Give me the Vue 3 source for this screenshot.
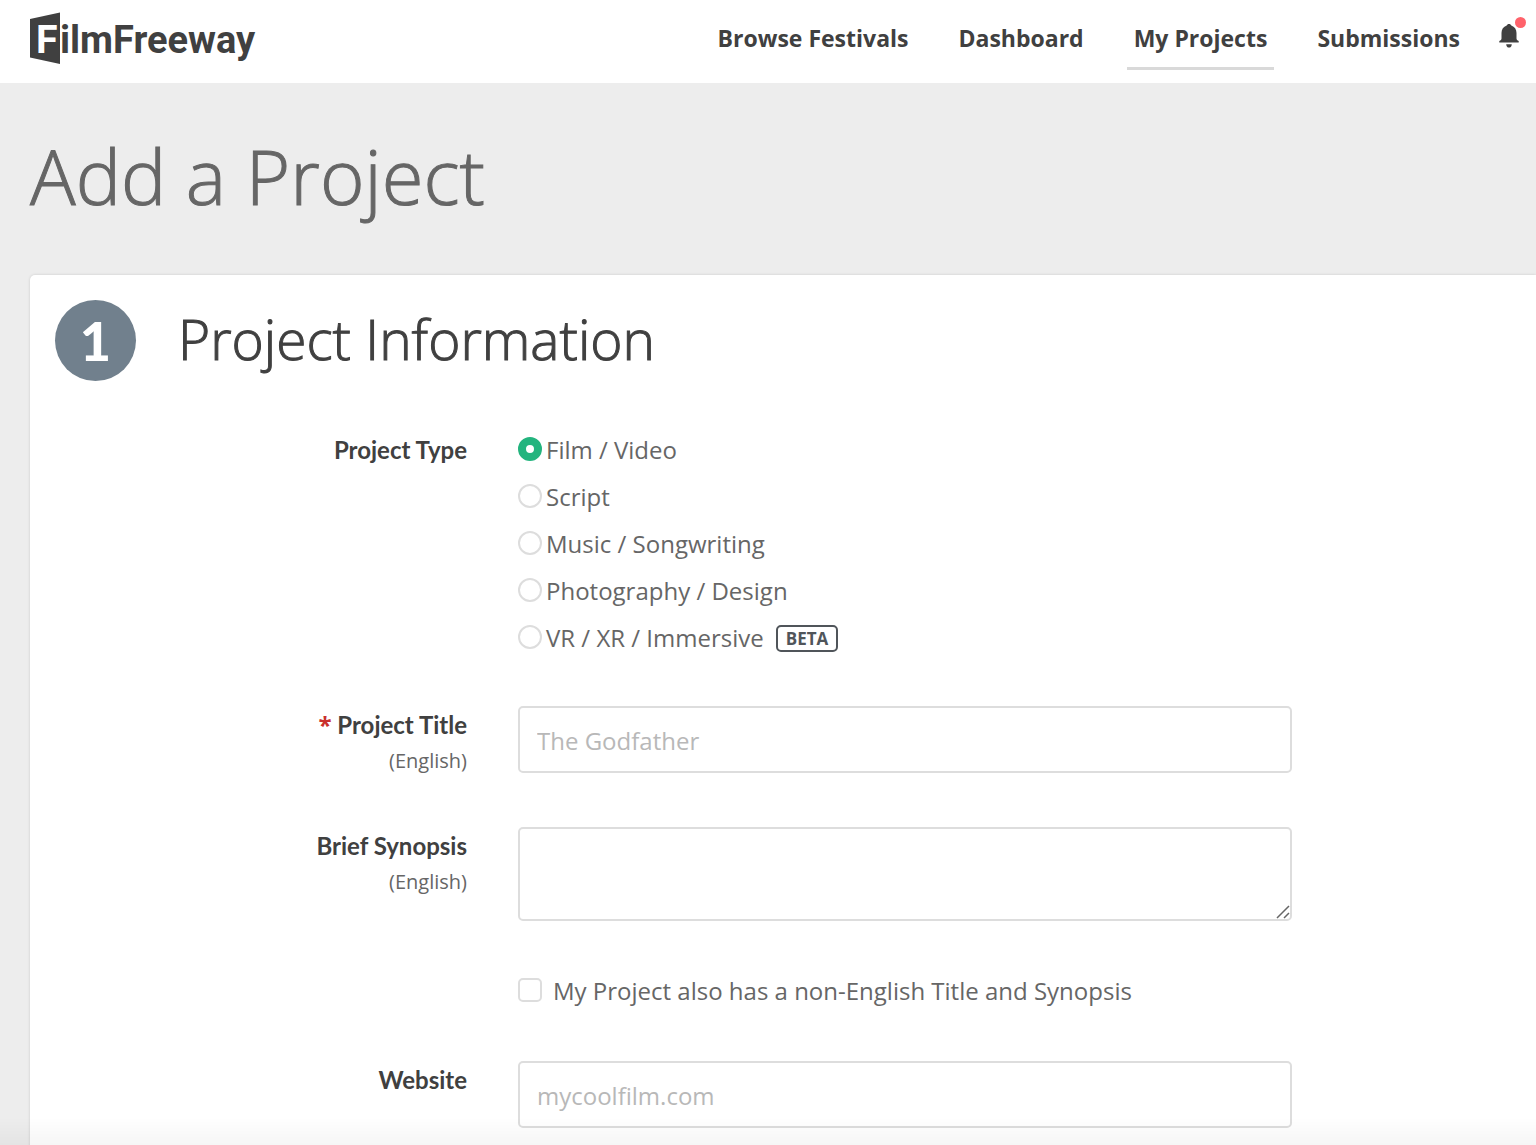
<script setup>
import { ref } from 'vue'

const navItems = [
  { label: 'Browse Festivals', active: false },
  { label: 'Dashboard', active: false },
  { label: 'My Projects', active: true },
  { label: 'Submissions', active: false },
]

const projectTypes = [
  { value: 'film', label: 'Film / Video' },
  { value: 'script', label: 'Script' },
  { value: 'music', label: 'Music / Songwriting' },
  { value: 'photo', label: 'Photography / Design' },
  { value: 'vr', label: 'VR / XR / Immersive', beta: true },
]

const projectType = ref('film')
const title = ref('')
const synopsis = ref('')
const nonEnglish = ref(false)
const website = ref('')
</script>

<template>
  <div class="page">
    <header class="topbar">
      <a href="#" class="logo" aria-label="FilmFreeway">
        <svg width="230" height="56" viewBox="0 0 230 56">
          <path d="M0 8 L30 1.5 V53 L0 46.5 Z" fill="#404040" />
          <text class="mark-letter" x="6" y="42">F</text>
          <text class="wordmark" x="30" y="42">ilmFreeway</text>
        </svg>
      </a>
      <nav class="nav">
        <a
          v-for="item in navItems"
          :key="item.label"
          href="#"
          class="nav-link"
          :class="{ active: item.active }"
        >{{ item.label }}</a>
        <button type="button" class="bell" aria-label="Notifications">
          <svg width="20" height="24" viewBox="0 0 20 24" fill="#404040">
            <path d="M10 0 C8.8 0 8 .7 7.7 1.5 C4.300 2.600 2.500 5.400 2.500 9 V14.500 C2.500 15.600 1.700 16.300 .3 17 V18.500 H19.700 V17 C18.300 16.300 17.500 15.600 17.500 14.500 V9 C17.500 5.400 15.700 2.600 12.300 1.500 C12 .7 11.200 0 10 0 Z" />
            <path d="M7.200 20.200 H12.800 C12.600 22.300 11.600 23.600 10 23.600 C8.400 23.600 7.400 22.300 7.200 20.200 Z" />
          </svg>
          <span class="dot"></span>
        </button>
      </nav>
    </header>

    <main class="content">
      <h1 class="page-title">Add a Project</h1>

      <form class="card" @submit.prevent>
        <div class="card-head">
          <span class="step">1</span>
          <h2 class="section-title">Project Information</h2>
        </div>

        <div class="rows">
          <div class="row" role="radiogroup" aria-labelledby="type-label">
            <div class="caption"><span id="type-label" class="name">Project Type</span></div>
            <div class="radios">
              <label v-for="type in projectTypes" :key="type.value" class="choice">
                <input v-model="projectType" type="radio" name="type" class="radio" :value="type.value">
                <span>{{ type.label }}</span>
                <span v-if="type.beta" class="beta">BETA</span>
              </label>
            </div>
          </div>

          <div class="row">
            <label class="caption" for="title">
              <span class="name"><span class="required">*</span> Project Title</span>
              <span class="hint">(English)</span>
            </label>
            <input id="title" v-model="title" type="text" class="field" placeholder="The Godfather">
          </div>

          <div class="row">
            <label class="caption" for="synopsis">
              <span class="name">Brief Synopsis</span>
              <span class="hint">(English)</span>
            </label>
            <div class="area-wrap">
              <textarea id="synopsis" v-model="synopsis" class="field area"></textarea>
              <svg class="grip" width="14" height="14" viewBox="0 0 14 14" stroke="#666" stroke-width="1.500">
                <path d="M1 13 L13 1 M8 13 L13 8" />
              </svg>
            </div>
          </div>

          <div class="row">
            <label class="choice check-choice">
              <input v-model="nonEnglish" type="checkbox" class="check">
              <span>My Project also has a non-English Title and Synopsis</span>
            </label>
          </div>

          <div class="row">
            <label class="caption" for="website"><span class="name">Website</span></label>
            <input id="website" v-model="website" type="text" class="field" placeholder="mycoolfilm.com">
          </div>
        </div>
      </form>
    </main>
    <div class="edge-fade"></div>
  </div>
</template>

<style>
body {
  background: #ededed;
  overflow: hidden;
}
</style>

<style scoped>
.page,
.page * {
  box-sizing: border-box;
}
.page {
  height: 100vh;
  overflow: hidden;
  background: #ededed;
  color: #666;
  font-family: "Open Sans", "Noto Sans", sans-serif;
  font-size: 24px;
}
.topbar {
  display: flex;
  justify-content: space-between;
  align-items: flex-start;
  height: 83px;
  padding: 0 17px 0 30px;
  background: #fff;
}
.logo {
  margin-top: 11px;
}
.logo svg {
  display: block;
  overflow: visible;
}
.wordmark,
.mark-letter {
  font-family: Roboto, sans-serif;
  font-size: 38px;
  font-weight: 700;
  fill: #404040;
}
.mark-letter {
  font-family: Inter, sans-serif;
  fill: #fff;
}
.nav {
  display: flex;
  align-items: flex-start;
}
.nav-link {
  margin-right: 36px;
  padding: 20px 7px 11px;
  border-bottom: 3px solid transparent;
  color: #404040;
  font-size: 23px;
  font-weight: 700;
  line-height: 36px;
  text-decoration: none;
  white-space: nowrap;
}
.nav-link:nth-last-child(2) {
  margin-right: 32px;
}
.nav-link.active {
  border-color: #d9d9d9;
}
.bell {
  position: relative;
  display: block;
  margin: 24px 0 0;
  padding: 0;
  border: 0;
  background: none;
}
.bell svg {
  display: block;
}
.dot {
  position: absolute;
  top: -7px;
  right: -7px;
  width: 11px;
  height: 11px;
  border-radius: 50%;
  background: #ff626b;
}
.content {
  padding-left: 30px;
}
.page-title {
  margin: 0;
  padding: 48px 0 54px;
  font-size: 76px;
  font-weight: 300;
  line-height: 90px;
  -webkit-text-stroke: 1px currentColor;
}
.card {
  padding-bottom: 49px;
  border-top-left-radius: 5px;
  background: #fff;
  box-shadow: 0 0 3px rgba(0, 0, 0, 0.15);
}
.card-head {
  display: flex;
  align-items: center;
  gap: 42px;
  padding: 25px 25px 50px;
}
.step {
  display: flex;
  align-items: center;
  justify-content: center;
  width: 81px;
  height: 81px;
  border-radius: 50%;
  background: #71808d;
  color: #fff;
  font-family: Lato, sans-serif;
  font-size: 54px;
  font-weight: 900;
}
.section-title {
  margin: 0;
  padding-bottom: 4px;
  color: #404040;
  font-size: 55px;
  font-weight: 300;
  line-height: 76px;
  -webkit-text-stroke: 1px currentColor;
}
.rows {
  display: flex;
  flex-direction: column;
  gap: 49px;
}
.row {
  display: grid;
  grid-template-columns: 437fr 774fr 193fr;
  column-gap: 51px;
  align-items: start;
}
.caption {
  display: flex;
  flex-direction: column;
  align-items: flex-end;
  padding-top: 1px;
}
.name {
  color: #404040;
  font-family: Lato, sans-serif;
  font-size: 24px;
  font-weight: 700;
  line-height: 36px;
}
.required {
  color: #c9302c;
  font-family: "Open Sans", sans-serif;
}
.hint {
  font-size: 20px;
  line-height: 35px;
}
.radios {
  display: flex;
  flex-direction: column;
  gap: 11px;
  padding-bottom: 2px;
}
.choice {
  display: flex;
  align-items: center;
  gap: 4px;
  height: 36px;
  white-space: nowrap;
}
.check-choice {
  grid-column: 2;
  gap: 11px;
  height: 40px;
  margin-bottom: 2px;
}
.radio,
.check {
  appearance: none;
  flex: none;
  width: 24px;
  height: 24px;
  margin: 0;
  border: 2px solid #ddd;
  border-radius: 50%;
  background: #fff;
}
.check {
  border-radius: 5px;
}
.radio:checked {
  border: 8px solid #23b47e;
}
.beta {
  margin: 2px 0 0 8px;
  padding: 0 8px;
  border: 2px solid #50555a;
  border-radius: 5px;
  color: #50555a;
  font-size: 17px;
  font-weight: 700;
  line-height: 23px;
}
.field {
  display: block;
  width: 100%;
  height: 67px;
  margin: 0;
  padding: 2px 17px 0;
  border: 2px solid #ddd;
  border-radius: 5px;
  outline: 0;
  background: #fff;
  color: #404040;
  font: inherit;
}
.field::placeholder {
  color: #b8b8b8;
  opacity: 1;
}
.area-wrap {
  position: relative;
}
.area {
  height: 94px;
  resize: none;
}
.grip {
  position: absolute;
  right: 2px;
  bottom: 2px;
  pointer-events: none;
}
.edge-fade {
  position: fixed;
  right: 0;
  bottom: 0;
  left: 0;
  height: 28px;
  background: linear-gradient(rgba(0, 0, 0, 0), rgba(0, 0, 0, 0.035));
  pointer-events: none;
}
</style>
